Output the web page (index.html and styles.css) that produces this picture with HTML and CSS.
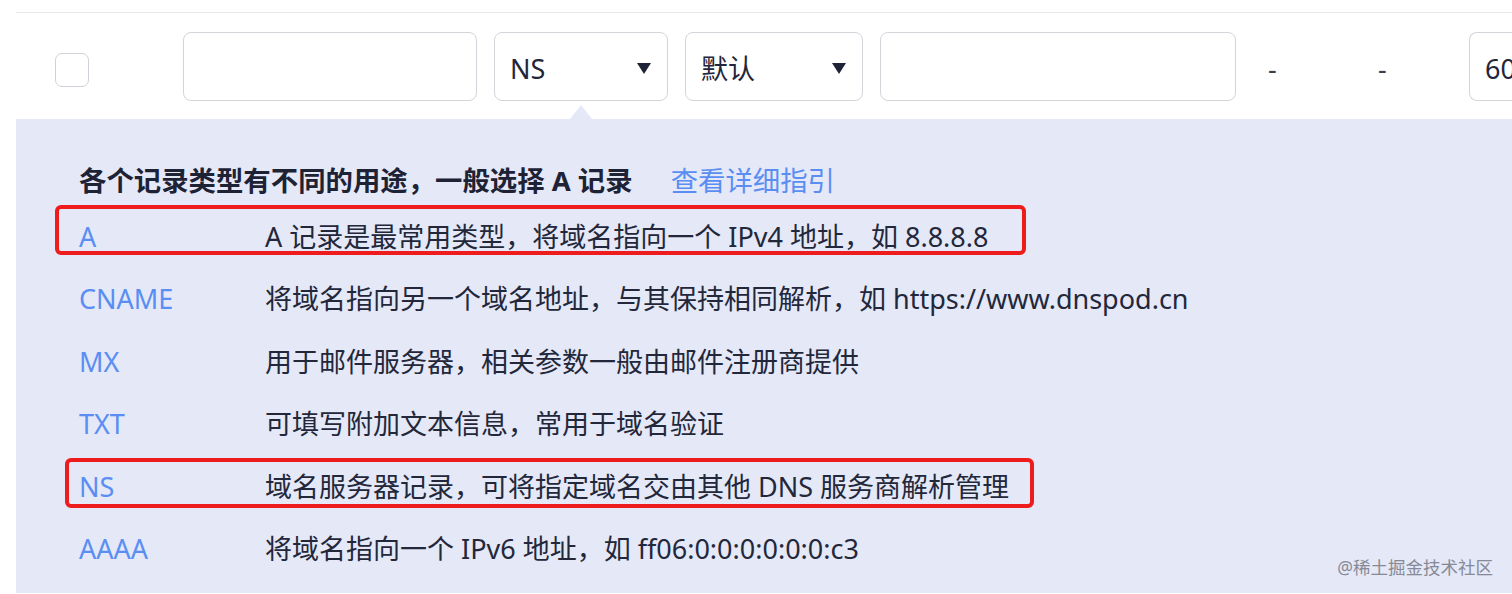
FILE: index.html
```html
<!DOCTYPE html>
<html lang="zh-CN">
<head>
<meta charset="utf-8">
<link rel="stylesheet" href="styles.css">
</head>
<body>
<div class="wrap">
  <div class="form-row">
    <span class="checkbox"></span>
    <span class="field field-host"></span>
    <span class="field select select-type">NS<i class="tri"></i></span>
    <span class="field select select-line">默认<i class="tri"></i></span>
    <span class="field field-value"></span>
    <span class="dash dash-1">-</span>
    <span class="dash dash-2">-</span>
    <span class="field field-ttl">60</span>
  </div>
  <div class="panel">
    <span class="caret"></span>
    <div class="heading"><b>各个记录类型有不同的用途，一般选择 A 记录</b><a class="link">查看详细指引</a></div>
    <ul class="types">
      <li><span class="t">A</span><span class="d">A 记录是最常用类型，将域名指向一个 IPv4 地址，如 8.8.8.8</span></li>
      <li><span class="t">CNAME</span><span class="d">将域名指向另一个域名地址，与其保持相同解析，如 https://www.dnspod.cn</span></li>
      <li><span class="t">MX</span><span class="d">用于邮件服务器，相关参数一般由邮件注册商提供</span></li>
      <li><span class="t">TXT</span><span class="d">可填写附加文本信息，常用于域名验证</span></li>
      <li><span class="t">NS</span><span class="d">域名服务器记录，可将指定域名交由其他 DNS 服务商解析管理</span></li>
      <li><span class="t">AAAA</span><span class="d">将域名指向一个 IPv6 地址，如 ff06:0:0:0:0:0:0:c3</span></li>
    </ul>
    <span class="mark mark-a"></span>
    <span class="mark mark-ns"></span>
    <span class="watermark">@稀土掘金技术社区</span>
  </div>
</div>
</body>
</html>
```

FILE: styles.css
```css
html, body {
  margin: 0;
  padding: 0;
  background: #ffffff;
  overflow: hidden;
}
body {
  width: 1512px;
  height: 594px;
  font-family: "Noto Sans", "Noto Sans CJK SC", sans-serif;
  color: #22263a;
}
.wrap {
  padding-top: 12px;
  margin-left: 16px;
}
.form-row {
  border-top: 1px solid #e6e7ea;
  height: 107px;
  display: flex;
  align-items: flex-start;
  padding-top: 19px;
  box-sizing: border-box;
  white-space: nowrap;
  overflow: hidden;
}
.form-row > * {
  flex-shrink: 0;
}
.checkbox {
  margin-left: 39px;
  margin-top: 21px;
  width: 34px;
  height: 34px;
  box-sizing: border-box;
  border: 1.5px solid #cfd2d8;
  border-radius: 7px;
  background: #fff;
}
.field {
  height: 69px;
  box-sizing: border-box;
  border: 1.5px solid #d3d5db;
  border-radius: 8px;
  background: #fff;
  font-size: 27px;
  line-height: 71px;
  padding-left: 15px;
  color: #22263a;
  position: relative;
}
.field-host { margin-left: 94px; width: 294px; }
.select-type { margin-left: 17px; width: 174px; }
.select-line { margin-left: 17px; width: 178px; }
.field-value { margin-left: 17px; width: 356px; }
.field-ttl { margin-left: 81px; width: 60px; border-right: none; border-radius: 8px 0 0 8px; }
.tri {
  position: absolute;
  right: 16px;
  top: 30px;
  width: 0;
  height: 0;
  border-left: 7.5px solid transparent;
  border-right: 7.5px solid transparent;
  border-top: 11px solid #1f2337;
}
.dash {
  font-size: 27px;
  line-height: 74px;
  color: #3b3e4c;
  width: 10px;
}
.dash-1 { margin-left: 32px; }
.dash-2 { margin-left: 100px; }

.panel {
  position: relative;
  background: #e4e8f7;
  height: 474px;
  padding: 38px 0 0 63px;
  box-sizing: border-box;
}
.caret {
  position: absolute;
  left: 554px;
  top: -14px;
  width: 0;
  height: 0;
  border-left: 11px solid transparent;
  border-right: 11px solid transparent;
  border-bottom: 14px solid #e4e8f7;
}
.heading {
  height: 48px;
  line-height: 48px;
  font-size: 27.4px;
  white-space: nowrap;
}
.heading b {
  font-weight: 700;
  color: #1e2235;
}
.link {
  margin-left: 38px;
  color: #5b8ef2;
  font-size: 27.4px;
}
.types {
  list-style: none;
  margin: 0;
  padding: 0;
}
.types li {
  display: flex;
  height: 62.4px;
  line-height: 63.4px;
  font-size: 27px;
  white-space: nowrap;
}
.types .t {
  width: 186px;
  flex-shrink: 0;
  color: #5b8ef2;
}
.types .d {
  color: #23273a;
}
.mark {
  position: absolute;
  box-sizing: border-box;
  border: 4px solid #ee1c1c;
  border-radius: 6px;
}
.mark-a { left: 39px; top: 86px; width: 971px; height: 50px; }
.mark-ns { left: 49px; top: 339px; width: 969px; height: 50px; }
.watermark {
  position: absolute;
  right: 19px;
  top: 436px;
  font-size: 17.5px;
  line-height: 24px;
  color: #878a96;
  white-space: nowrap;
}
```
